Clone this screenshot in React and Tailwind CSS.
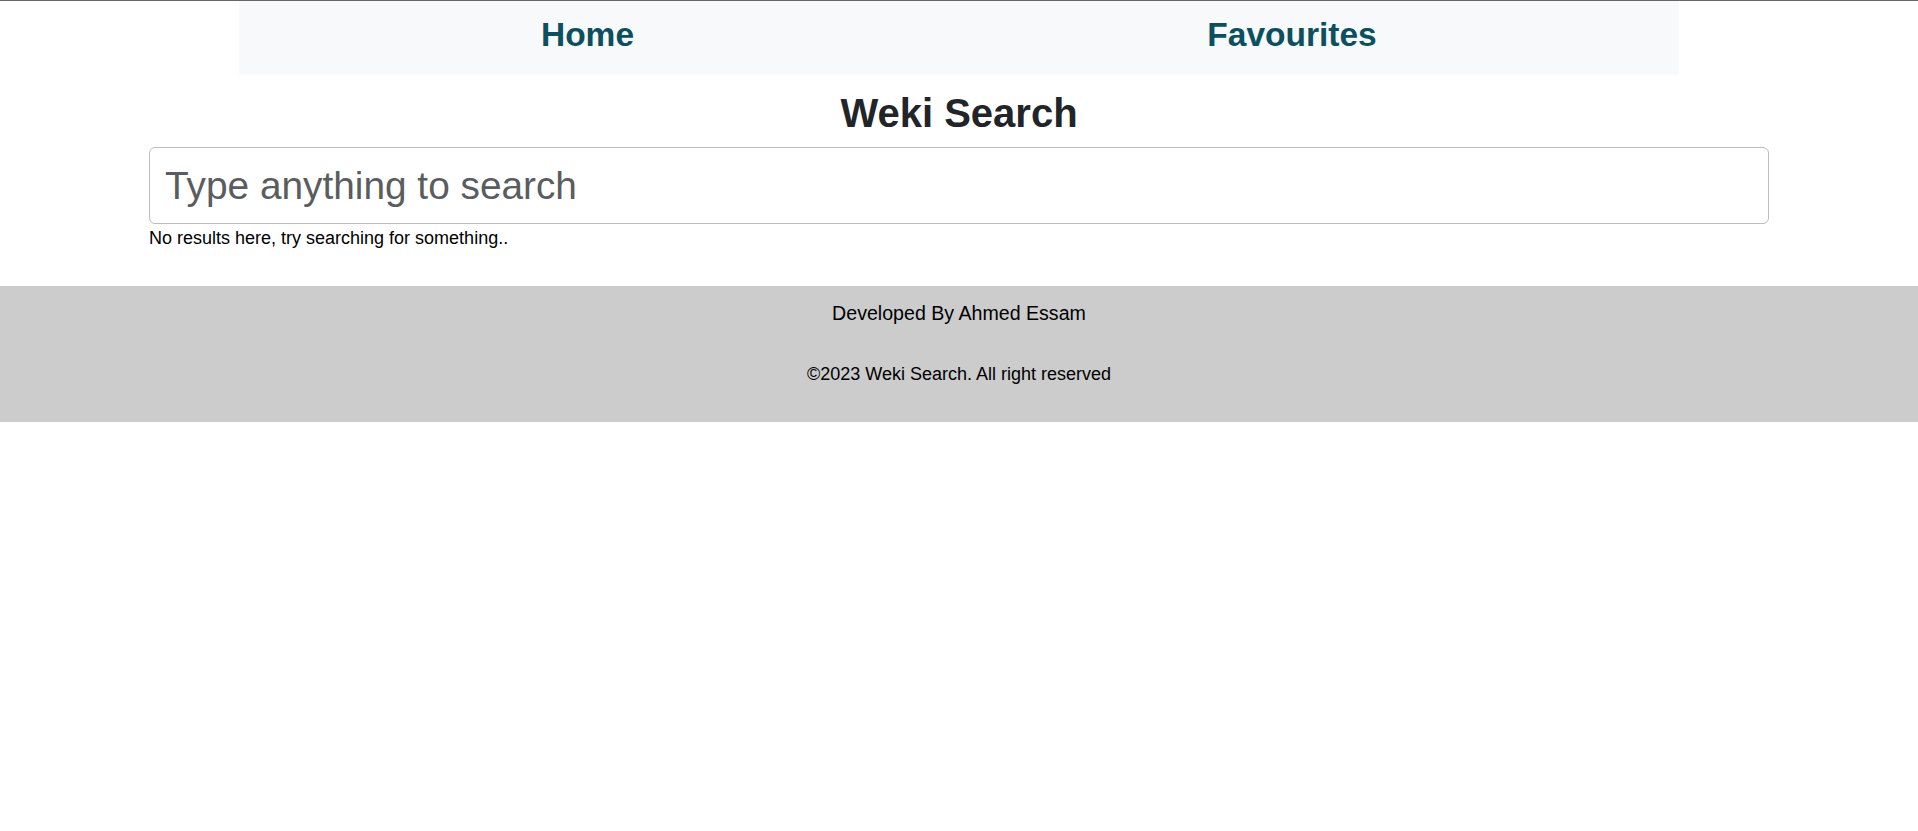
const font = { fontFamily: '"Liberation Sans", Arial, sans-serif' }

function NavBar() {
  return (
    <nav className="mx-auto h-[73px] w-[1440px] bg-[#f8f9fa]">
      <ul className="grid h-full grid-cols-[697px_712px] items-center pb-[5px]">
        <li className="text-center text-[33.5px] font-bold text-[#0b5060]">Home</li>
        <li className="text-center text-[33.5px] font-bold text-[#0b5060]">Favourites</li>
      </ul>
    </nav>
  )
}

function Footer() {
  return (
    <footer className="mt-[34px] bg-[#cccccc] pt-[14px] pb-[34px] text-center text-black">
      <p className="text-[19.6px] leading-[27px]">Developed By Ahmed Essam</p>
      <p className="mt-[34px] text-[18px] leading-[27px]">©2023 Weki Search. All right reserved</p>
    </footer>
  )
}

export default function App() {
  return (
    <div className="min-h-screen border-t border-[#666666] bg-white" style={font}>
      <NavBar />
      <main className="mx-auto w-[1620px]">
        <h1 className="mt-[15px] text-center text-[40px] font-bold leading-[48px] text-[#212529]">Weki Search</h1>
        <input
          type="text"
          placeholder="Type anything to search"
          className="mt-[10px] block h-[77px] w-full rounded-md border border-[#b9bec3] bg-white px-[15px] text-[38.8px] text-[#212529] placeholder:text-[#5a5d60] focus:outline-none"
        />
        <p className="pt-[1px] text-[18px] leading-[27px] text-black">No results here, try searching for something..</p>
      </main>
      <Footer />
    </div>
  )
}
